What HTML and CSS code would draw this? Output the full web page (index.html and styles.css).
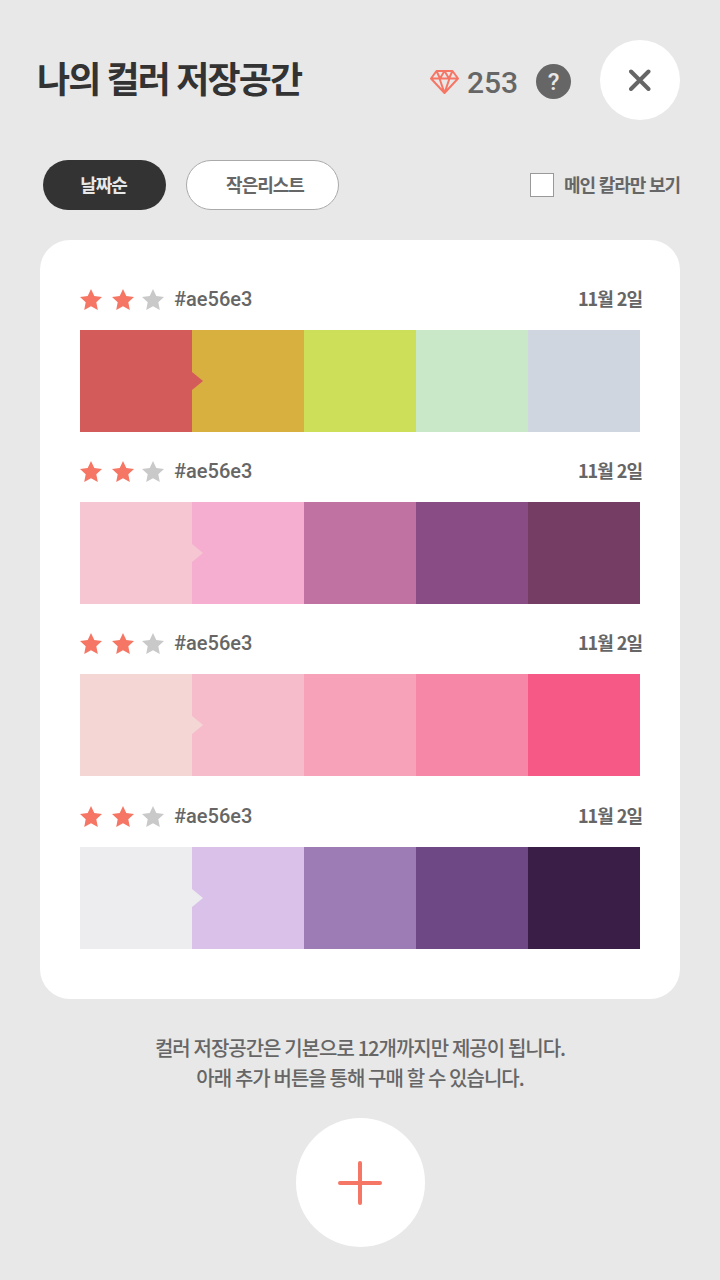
FILE: index.html
```html
<!DOCTYPE html>
<html lang="ko">
<head>
    <meta charset="UTF-8">
    <title>나의 컬러 저장공간</title>
    <link rel="stylesheet" href="styles.css">
</head>
<body>
    <!-- 아이콘 정의 -->
    <svg class="icon-defs">
        <symbol id="star" viewBox="0 0 22 21">
            <path d="M11 0l3.3 7.1 7.7 1-5.7 5.2 1.5 7.7-6.8-3.8L4.2 21l1.5-7.7L0 8.1l7.7-1z"/>
        </symbol>
    </svg>

    <header class="header">
        <h1 class="title">나의 컬러 저장공간</h1>
        <svg class="gem" viewBox="0 0 30 26">
            <path d="M6.5 2h16l5.5 7.5L14.5 24 1 9.5zM1 9.5h27M6.5 2l3.5 7.5L14.5 2l4.5 7.5L22.5 2M9.5 9.5l5 14.5 5-14.5"/>
        </svg>
        <span class="gem-count">253</span>
        <button class="help">?</button>
        <button class="close">
            <svg viewBox="0 0 22 22"><path d="M2 2.5l17.5 17.5M19.5 2.5L2 20"/></svg>
        </button>
    </header>

    <div class="filters">
        <button class="pill pill-active">날짜순</button>
        <button class="pill pill-list">작은리스트</button>
        <label class="main-only"><span class="checkbox"></span><span class="main-label">메인 칼라만 보기</span></label>
    </div>

    <main class="card">
        <section class="palette">
            <div class="palette-info">
                <svg class="star on"><use href="#star"/></svg>
                <svg class="star on"><use href="#star"/></svg>
                <svg class="star"><use href="#star"/></svg>
                <span class="code">#ae56e3</span>
                <span class="date">11월 2일</span>
            </div>
            <div class="swatches warm"><i></i><i></i><i></i><i></i><i></i></div>
        </section>
        <section class="palette">
            <div class="palette-info">
                <svg class="star on"><use href="#star"/></svg>
                <svg class="star on"><use href="#star"/></svg>
                <svg class="star"><use href="#star"/></svg>
                <span class="code">#ae56e3</span>
                <span class="date">11월 2일</span>
            </div>
            <div class="swatches plum"><i></i><i></i><i></i><i></i><i></i></div>
        </section>
        <section class="palette">
            <div class="palette-info">
                <svg class="star on"><use href="#star"/></svg>
                <svg class="star on"><use href="#star"/></svg>
                <svg class="star"><use href="#star"/></svg>
                <span class="code">#ae56e3</span>
                <span class="date">11월 2일</span>
            </div>
            <div class="swatches pink"><i></i><i></i><i></i><i></i><i></i></div>
        </section>
        <section class="palette">
            <div class="palette-info">
                <svg class="star on"><use href="#star"/></svg>
                <svg class="star on"><use href="#star"/></svg>
                <svg class="star"><use href="#star"/></svg>
                <span class="code">#ae56e3</span>
                <span class="date">11월 2일</span>
            </div>
            <div class="swatches violet"><i></i><i></i><i></i><i></i><i></i></div>
        </section>
    </main>

    <p class="notice">컬러 저장공간은 기본으로 12개까지만 제공이 됩니다.<br>아래 추가 버튼을 통해 구매 할 수 있습니다.</p>

    <button class="add">
        <svg viewBox="0 0 44 44"><path d="M22 2v40M2 22h40"/></svg>
    </button>
</body>
</html>
```

FILE: styles.css
```css
* {
    box-sizing: border-box;
}
body {
    margin: 0;
    height: 1280px;
    background: #e8e8e8;
    color: #666;
    font-family: "Noto Sans CJK KR", sans-serif;
    overflow: hidden;
}
button {
    border: 0;
    padding: 0;
    font-family: inherit;
}
.icon-defs {
    display: none;
}
.header {
    display: flex;
    align-items: center;
    height: 80px;
    margin: 40px 40px 0 37px;
}
.title {
    flex: 1;
    margin: 0;
    padding-bottom: 6px;
    color: #333;
    font-size: 36px;
    font-weight: 700;
    line-height: 50px;
    letter-spacing: -1.9px;
    word-spacing: -1px;
    white-space: nowrap;
}
.gem {
    width: 30px;
    height: 26px;
    margin: 3px 7px 0 0;
    fill: none;
    stroke: #f67665;
    stroke-width: 2;
    stroke-linejoin: round;
}
.gem-count {
    width: 69px;
    padding-top: 6px;
    font: 500 30px/36px Roboto, sans-serif;
}
.help {
    width: 35px;
    height: 35px;
    margin: 3px 29px 0 0;
    padding-top: 1px;
    border-radius: 50%;
    background: #666;
    color: #e8e8e8;
    font: 500 24px/34px Roboto, sans-serif;
}
.close {
    width: 80px;
    height: 80px;
    border-radius: 50%;
    background: #fff;
}
.close svg {
    display: block;
    width: 22px;
    height: 22px;
    margin: auto;
    stroke: #666;
    stroke-width: 4;
    stroke-linecap: round;
}
.filters {
    display: flex;
    align-items: center;
    height: 50px;
    margin: 40px 40px 0 43px;
}
.pill {
    height: 50px;
    padding-bottom: 2px;
    border-radius: 25px;
    font-size: 18px;
    font-weight: 700;
    letter-spacing: -1px;
}
.pill-active {
    width: 123px;
    margin-right: 20px;
    padding-right: 2px;
    background: #333;
    color: #e8e8e8;
}
.pill-list {
    width: 153px;
    padding-left: 5px;
    border: 1px solid #aaa;
    background: #fff;
    color: #666;
}
.main-only {
    display: flex;
    align-items: center;
    margin-left: auto;
    font-size: 18px;
    font-weight: 700;
    letter-spacing: -1px;
    word-spacing: -0.5px;
    white-space: nowrap;
}
.checkbox {
    width: 24px;
    height: 24px;
    border: 1px solid #999;
    background: #fff;
}
.main-label {
    width: 116px;
    margin-left: 10px;
    padding-bottom: 2px;
}
.card {
    height: 759px;
    margin: 30px 40px 0;
    padding: 40px 40px 0;
    border-radius: 30px;
    background: #fff;
}
.palette {
    margin-bottom: 20px;
}
.palette:nth-child(3) {
    margin-bottom: 21px;
}
.palette-info {
    display: flex;
    align-items: center;
    height: 50px;
    padding-bottom: 12px;
}
.star {
    width: 22px;
    height: 21px;
    margin-right: 10px;
    fill: #c9c9c9;
}
.star.on {
    fill: #f67665;
}
.star.on + .star:not(.on) {
    margin-left: -2px;
}
.code {
    font: 500 20px/24px Roboto, sans-serif;
}
.date {
    margin: 0 -2px 0 auto;
    padding-bottom: 2px;
    font-size: 18px;
    font-weight: 700;
    letter-spacing: -1px;
    line-height: 24px;
}
.swatches {
    display: grid;
    grid-template-columns: repeat(5, 1fr);
    height: 102px;
}
.swatches i {
    position: relative;
    background: var(--c);
}
/* 메인 컬러 표시 */
.swatches i:first-child::after {
    content: "";
    position: absolute;
    left: 100%;
    top: 42px;
    z-index: 1;
    border: solid transparent;
    border-width: 9px 0 9px 11px;
    border-left-color: var(--c);
}
.warm i:nth-child(1) { --c: #d35b59; }
.warm i:nth-child(2) { --c: #d7b040; }
.warm i:nth-child(3) { --c: #cdde58; }
.warm i:nth-child(4) { --c: #c8e8c8; }
.warm i:nth-child(5) { --c: #cfd6e0; }
.plum i:nth-child(1) { --c: #f6c6d2; }
.plum i:nth-child(2) { --c: #f6aed0; }
.plum i:nth-child(3) { --c: #c072a3; }
.plum i:nth-child(4) { --c: #8a4c84; }
.plum i:nth-child(5) { --c: #763d64; }
.pink i:nth-child(1) { --c: #f4d7d5; }
.pink i:nth-child(2) { --c: #f6bccb; }
.pink i:nth-child(3) { --c: #f7a2b9; }
.pink i:nth-child(4) { --c: #f687a6; }
.pink i:nth-child(5) { --c: #f65985; }
.violet i:nth-child(1) { --c: #ededf0; }
.violet i:nth-child(2) { --c: #d9c1e9; }
.violet i:nth-child(3) { --c: #9d7bb4; }
.violet i:nth-child(4) { --c: #6e4785; }
.violet i:nth-child(5) { --c: #3b1e48; }
.notice {
    margin: 34px 0 0;
    font-size: 20px;
    font-weight: 500;
    line-height: 30px;
    letter-spacing: -1px;
    word-spacing: -0.8px;
    text-align: center;
}
.add {
    display: block;
    width: 129px;
    height: 129px;
    margin: 25px auto 0;
    border-radius: 50%;
    background: #fff;
}
.add svg {
    display: block;
    width: 44px;
    height: 44px;
    margin: auto;
    stroke: #f67665;
    stroke-width: 4;
    stroke-linecap: round;
}
```
